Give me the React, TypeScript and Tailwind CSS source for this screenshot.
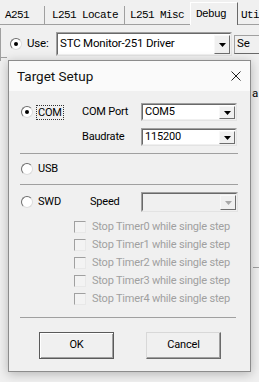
import React from "react";

const SANS = { fontFamily: "Roboto, 'Liberation Sans', sans-serif" } as const;
const MONO = { fontFamily: "'Liberation Mono', 'DejaVu Sans Mono', monospace" } as const;

function Radio({ checked }: { checked?: boolean }) {
  return (
    <div className="relative w-[12px] h-[12px] shrink-0 rounded-full border border-t-[#6d6d6d] border-l-[#6d6d6d] border-r-[#dcdcdc] border-b-[#dcdcdc] bg-white">
      {checked && (
        <div className="absolute left-[3px] top-[3px] w-[4px] h-[4px] rounded-full bg-black" />
      )}
    </div>
  );
}

function Arrow({ color = "#000" }: { color?: string }) {
  return (
    <svg width="7" height="4" viewBox="0 0 7 4">
      <polygon points="0,0 7,0 3.5,4" fill={color} />
    </svg>
  );
}

function DropBtn({ disabled }: { disabled?: boolean }) {
  return (
    <div className="w-[16px] self-stretch shrink-0 flex items-center justify-center bg-[#f0f0f0] border border-t-[#f8f8f8] border-l-[#f8f8f8] border-r-[#6e6e6e] border-b-[#6e6e6e]">
      <Arrow color={disabled ? "#a8a8a8" : "#000"} />
    </div>
  );
}

function Combo({
  value,
  width,
  height,
  disabled,
}: {
  value: string;
  width: string;
  height: string;
  disabled?: boolean;
}) {
  return (
    <div
      className={`${width} ${height} shrink-0 border border-t-[#a0a0a0] border-l-[#a0a0a0] border-r-[#e3e3e3] border-b-[#e3e3e3]`}
    >
      <div
        className={`h-full flex border border-t-[#696969] border-l-[#696969] border-r-[#f0f0f0] border-b-[#f0f0f0] ${
          disabled ? "bg-[#f0f0f0]" : "bg-white"
        }`}
      >
        <div className="flex-1 flex items-center pl-[2px] text-black">{value}</div>
        <div className="flex p-[1px] pr-0 pb-0">
          <DropBtn disabled={disabled} />
        </div>
      </div>
    </div>
  );
}

function Check({ label }: { label: string }) {
  return (
    <div className="h-[18px] flex items-center pl-[54px]">
      <div className="w-[12px] h-[12px] shrink-0 border border-t-[#a0a0a0] border-l-[#a0a0a0] border-r-[#e8e8e8] border-b-[#e8e8e8] bg-[#f3f3f3]" />
      <span className="ml-[6px] text-[#a0a0a0]">{label}</span>
    </div>
  );
}

export default function App() {
  return (
    <div
      className="relative w-[259px] h-[382px] overflow-hidden bg-[#f0f0f0] text-[11px] tracking-[-0.2px] text-black"
      style={SANS}
    >
      {/* background window: tab strip */}
      <div className="flex items-end h-[25px] border-b border-[#a0a0a0] tracking-normal" style={MONO}>
        <div className="w-[45px] h-[18px] flex items-center pl-[5px] text-[11px] tracking-[-0.6px] border-r border-[#a0a0a0]">
          A251
        </div>
        <div className="w-[80px] h-[18px] flex items-center pl-[7px] text-[11px] tracking-[-0.6px] border-r border-[#a0a0a0]">
          L251 Locate
        </div>
        <div className="w-[65px] h-[18px] flex items-center pl-[5px] text-[11px] tracking-[-0.6px]">
          L251 Misc
        </div>
        <div className="w-[48px] h-[23px] -mb-[1px] flex items-start pt-[3px] pl-[5px] text-[11px] tracking-[-0.6px] bg-[#f0f0f0] border-l border-t border-l-white border-t-white border-r border-r-[#696969]">
          Debug
        </div>
        <div className="flex-1 h-[18px] flex items-center pl-[3px] text-[11px] tracking-[-0.6px]">
          Uti
        </div>
      </div>
      <div className="flex">
        <div className="w-[7px] h-[33px] mt-[3px] border-r border-[#a0a0a0]" />
        <div className="flex items-center pl-[9px] pt-[7px] h-[31px] text-[11.5px]">
          <Radio checked />
          <span className="ml-[5px] w-[29px]">Use:</span>
          <Combo value="STC Monitor-251 Driver" width="w-[176px]" height="h-[24px]" />
          <div className="ml-[2px] h-[19px] w-[30px] pl-[2px] flex items-center border border-[#a0a0a0] border-r-[#696969] border-b-[#696969]">
            Se
          </div>
        </div>
      </div>
      {/* partial texts to the right of the dialog */}
      <div className="absolute left-[252px] top-[85px] text-[11.5px]">a</div>
      <div className="absolute left-[253px] top-[267px] w-[6px] border-t border-[#a0a0a0]" />
      <div className="absolute left-[0px] top-[57px] w-[7px] border-t border-[#a0a0a0]" />

      {/* dialog */}
      <div className="absolute left-[8px] top-[60px] w-[243px] border border-[#8c8c8c] bg-[#f0f0f0] shadow-[0_2px_10px_rgba(0,0,0,0.25)]">
        <div className="h-[30px] flex items-center justify-between bg-[#fafafa] pl-[8px] pr-[9px]">
          <span className="text-[13.5px] tracking-normal text-[#111]">Target Setup</span>
          <svg width="10" height="10" viewBox="0 0 10 10">
            <path d="M0.5 0.5 L9.5 9.5 M9.5 0.5 L0.5 9.5" stroke="#222" strokeWidth="1" />
          </svg>
        </div>
        <div className="pl-[11px] pb-[12px]">
          {/* COM row */}
          <div className="mt-[12px] flex items-center h-[18px]">
            <div className="w-[62px] flex items-center pl-[1px]">
              <Radio checked />
              <span className="ml-[4px] px-[1px] outline-1 outline-dotted outline-[#333] leading-[13px]">
                COM
              </span>
            </div>
            <span className="w-[59px]">COM Port</span>
            <Combo value="COM5" width="w-[96px]" height="h-[18px]" />
          </div>
          {/* Baudrate row */}
          <div className="mt-[7px] flex items-center h-[18px]">
            <div className="w-[62px]" />
            <span className="w-[59px]">Baudrate</span>
            <Combo value="115200" width="w-[96px]" height="h-[18px]" />
          </div>
          <div className="mt-[7px] w-[218px] border-t border-[#a0a0a0]" />
          {/* USB row */}
          <div className="h-[30px] flex items-center pl-[1px]">
            <Radio />
            <span className="ml-[5px]">USB</span>
          </div>
          <div className="w-[218px] border-t border-[#a0a0a0]" />
          {/* SWD row */}
          <div className="mt-[7px] flex items-center h-[20px]">
            <div className="w-[70px] flex items-center pl-[1px]">
              <Radio />
              <span className="ml-[5px]">SWD</span>
            </div>
            <span className="w-[51px]">Speed</span>
            <Combo value="" width="w-[97px]" height="h-[20px]" disabled />
          </div>
          <div className="mt-[6px]">
            {[0, 1, 2, 3, 4].map((i) => (
              <Check key={i} label={`Stop Timer${i} while single step`} />
            ))}
          </div>
          <div className="mt-[9px] w-[216px] border-t border-[#a0a0a0]" />
          <div className="mt-[14px] flex pl-[19px]">
            <div className="w-[75px] h-[27px] flex items-center justify-center border border-[#5a5a5a] shadow-[inset_1px_1px_0_#fff,inset_-1px_-1px_0_#a0a0a0]">
              OK
            </div>
            <div className="ml-[32px] w-[75px] h-[27px] flex items-center justify-center border border-t-[#d8d8d8] border-l-[#d8d8d8] border-r-[#6a6a6a] border-b-[#6a6a6a] shadow-[inset_-1px_-1px_0_#a0a0a0]">
              Cancel
            </div>
          </div>
        </div>
      </div>
    </div>
  );
}
